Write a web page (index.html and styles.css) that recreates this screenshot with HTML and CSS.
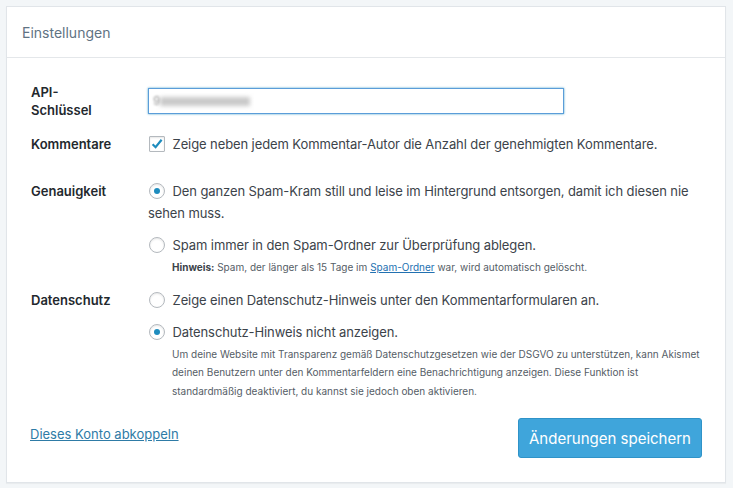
FILE: index.html
```html
<!DOCTYPE html>
<html lang="de">
  <head>
    <meta charset="UTF-8" />
    <meta name="viewport" content="width=device-width, initial-scale=1.0" />
    <title>Einstellungen</title>
    <link rel="stylesheet" href="styles.css">
  </head>
  <body>
    <div class="panel">
      <div class="panel-head">Einstellungen</div>
      <form class="panel-body">
        <div class="row row-key">
          <div class="row-label">API-<br />Schlüssel</div>
          <div class="row-field">
            <div class="key-field">
              <span class="key-first">9</span><span class="key-rest"></span>
            </div>
          </div>
        </div>

        <div class="row row-comments">
          <div class="row-label">Kommentare</div>
          <div class="row-field">
            <label class="option">
              <span class="check">
                <svg viewBox="0 0 16 16" width="16" height="16">
                  <path d="M3.6 8.2 L6.6 11.2 L12.6 3.8" fill="none" stroke="#1e8cbe" stroke-width="2.2" />
                </svg>
              </span>
              Zeige neben jedem Kommentar-Autor die Anzahl der genehmigten Kommentare.
            </label>
          </div>
        </div>

        <div class="row row-strict">
          <div class="row-label">Genauigkeit</div>
          <div class="row-field">
            <label class="option">
              <span class="radio on"></span>
              Den ganzen Spam-Kram still und leise im Hintergrund entsorgen, damit ich diesen nie sehen muss.
            </label>
            <label class="option next">
              <span class="radio"></span>
              Spam immer in den Spam-Ordner zur Überprüfung ablegen.
            </label>
            <p class="note note-hint">
              <strong>Hinweis:</strong> Spam, der länger als 15 Tage im
              <a href="#">Spam-Ordner</a> war, wird automatisch gelöscht.
            </p>
          </div>
        </div>

        <div class="row row-privacy">
          <div class="row-label">Datenschutz</div>
          <div class="row-field">
            <label class="option">
              <span class="radio"></span>
              Zeige einen Datenschutz-Hinweis unter den Kommentarformularen an.
            </label>
            <label class="option next">
              <span class="radio on"></span>
              Datenschutz-Hinweis nicht anzeigen.
            </label>
            <p class="note">
              Um deine Website mit Transparenz gemäß Datenschutzgesetzen wie der DSGVO zu unterstützen,
              kann Akismet deinen Benutzern unter den Kommentarfeldern eine Benachrichtigung anzeigen.
              Diese Funktion ist standardmäßig deaktiviert, du kannst sie jedoch oben aktivieren.
            </p>
          </div>
        </div>

        <div class="panel-actions">
          <a href="#" class="disconnect">Dieses Konto abkoppeln</a>
          <button type="submit" class="save-btn">Änderungen speichern</button>
        </div>
      </form>
    </div>
  </body>
</html>
```

FILE: styles.css
```css
* {
  box-sizing: border-box;
  margin: 0;
  padding: 0;
}

html,
body {
  background: #f3f6f8;
  font-family: "Inter", "Noto Sans", sans-serif;
  color: #3c434a;
  font-size: 13px;
}

body {
  padding: 6px 7px 6px 6px;
}

/* Panel */
.panel {
  background: #fff;
  border: 1px solid #e1e5e9;
  box-shadow: 0 1px 1px rgba(0, 0, 0, 0.04);
}

.panel-head {
  height: 51px;
  padding: 0 15px;
  display: flex;
  align-items: center;
  font-size: 14px;
  color: #5f7383;
  border-bottom: 1px solid #e4e7ea;
}

.panel-body {
  padding: 25px 23px 24px 24px;
}

/* Rows */
.row {
  display: grid;
  grid-template-columns: 117px 1fr;
}

.row-label {
  font-weight: 600;
  color: #23282d;
  line-height: 22px;
}

.row-key .row-label {
  line-height: 18px;
}

.row-field {
  line-height: 22px;
  letter-spacing: -0.1px;
}

.row-comments {
  margin-top: 14px;
}

.row-strict {
  margin-top: 25px;
}

.row-privacy {
  margin-top: 12px;
}

/* API key field */
.key-field {
  margin-top: 5px;
  width: 416px;
  height: 26px;
  border: 1px solid #5b9dd9;
  box-shadow: 0 0 2px rgba(30, 140, 190, 0.8);
  display: flex;
  align-items: center;
  padding-left: 4px;
}

.key-first {
  color: #999;
  filter: blur(1.2px);
  font-size: 12px;
}

.key-rest {
  width: 90px;
  height: 9px;
  background: #c9c9c9;
  filter: blur(2px);
}

/* Options */
.option {
  display: block;
}

.option.next {
  margin-top: 10px;
}

.check,
.radio {
  display: inline-block;
  width: 16px;
  height: 16px;
  border: 1px solid #b4b9be;
  background: #fff;
  box-shadow: inset 0 1px 2px rgba(0, 0, 0, 0.1);
  vertical-align: -3px;
  margin: 0 4px 0 1px;
  position: relative;
}

.check {
  border-radius: 1px;
}

.check svg {
  position: absolute;
  left: -1px;
  top: -1px;
}

.radio {
  border-radius: 50%;
}

.radio.on::after {
  content: "";
  position: absolute;
  left: 4px;
  top: 4px;
  width: 6px;
  height: 6px;
  border-radius: 50%;
  background: #1e8cbe;
}

/* Small hint text below options */
.note {
  font-size: 10px;
  line-height: 18.5px;
  letter-spacing: 0;
  color: #555d66;
  padding-left: 24px;
  margin-top: 2px;
}

.note strong {
  color: #3c434a;
}

.note a {
  color: #2271b1;
}

/* Footer actions */
.panel-actions {
  display: flex;
  justify-content: space-between;
  align-items: center;
  margin-top: 18px;
}

.disconnect {
  color: #2e7ba6;
  font-size: 13px;
  margin-top: -9px;
  margin-left: -1px;
}

.save-btn {
  width: 184px;
  height: 40px;
  background: #3fa5db;
  border: 1px solid #2f93c8;
  border-radius: 3px;
  color: #fff;
  font-family: inherit;
  font-size: 15px;
  cursor: pointer;
}
```
